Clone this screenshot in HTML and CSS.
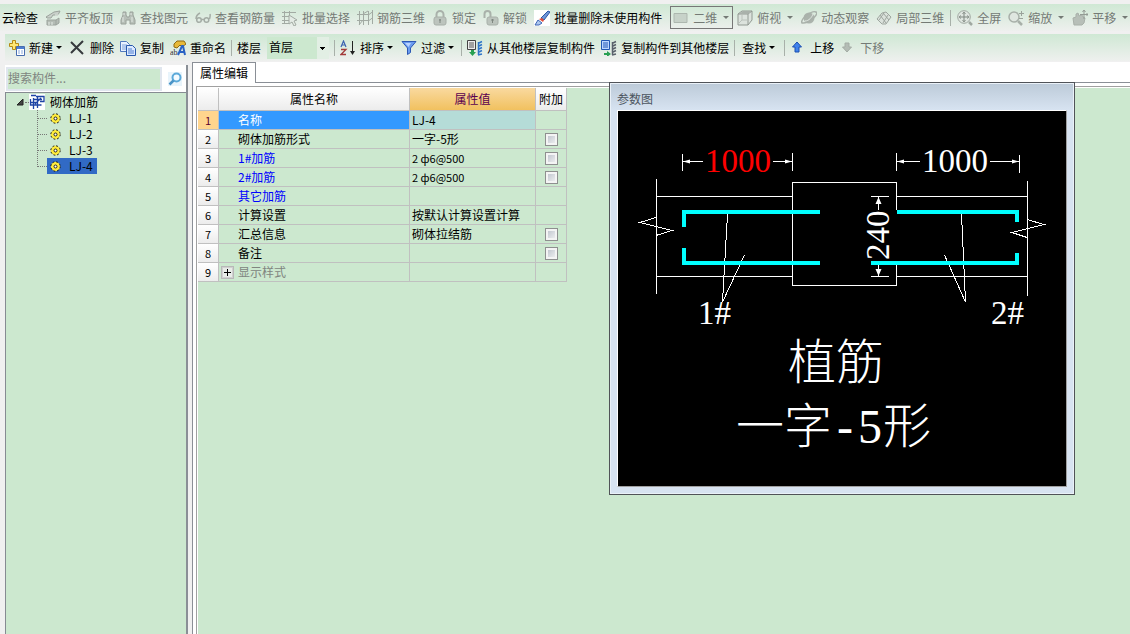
FILE: index.html
```html
<!DOCTYPE html>
<html lang="zh-CN">
<head>
<meta charset="utf-8">
<title>属性编辑</title>
<link rel="stylesheet" href="styles.css">
</head>
<body>
<div class="toolbar toolbar-view" role="toolbar" aria-label="视图">
  <button class="tool">云检查</button>
  <button class="tool off"><svg class="icon" viewBox="0 0 16 16"><path d="M1 7l8-5 6-1-2 4H8l-2 3H2z" fill="#c9d0ca" stroke="#9ba39c"/><path d="M2 10h9v5H2zM11 10l3-2v5l-3 2" fill="#b4bcb5" stroke="#9ba39c"/><path d="M4 12v3M7 12v3M10 5l4 0" stroke="#e4ebe5"/></svg>平齐板顶</button>
  <button class="tool off"><svg class="icon" viewBox="0 0 16 16"><path d="M3 2h3v3l1 2h2l1-2V2h3v3l2 5v4h-5v-4H6v4H1v-4l2-5z" fill="#b7bfb8" stroke="#9aa29b"/><path d="M3 7v5M12 7v5M4 3v2M11 3v2" stroke="#e2e9e3"/></svg>查找图元</button>
  <button class="tool off"><svg class="icon" viewBox="0 0 16 16" fill="none" stroke="#a4aca5" stroke-width="1.5"><path d="M5 3Q1 5 1 9M14.500 9q1-3 .5-5"/><circle cx="4" cy="10" r="2.300"/><circle cx="11.500" cy="10" r="2.300"/><path d="M6.500 9.500h2.500"/></svg>查看钢筋量</button>
  <button class="tool off"><svg class="icon" viewBox="0 0 16 16" fill="none" stroke="#a2aaa3"><path d="M2.500 1v13M0 2.500h14M0 6.500h8M0 10.500h8M0 13.500h7M7.500 1v6"/><path d="M7 5l8 5-3 1 2 4-2 1-2-4-3 2z" fill="#e4ebe5"/></svg>批量选择</button>
  <button class="tool off"><svg class="icon" viewBox="0 0 16 16" fill="none" stroke="#a2aaa3"><path d="M0 4.500h12l4-3M0 10.500h12l4-3M2.500 1v14M6.500 1v14M11.500 1v14M15.500 0v14M2 15l4-5M6 4l5-3"/></svg>钢筋三维</button>
  <button class="tool off"><svg class="icon" viewBox="0 0 16 16"><path d="M4.500 7V4.500a3.500 3.500 0 0 1 7 0V7" fill="none" stroke="#a9b1aa" stroke-width="2"/><rect x="2" y="7" width="12" height="8" rx="2" fill="#bcc4bd" stroke="#a8b0a9"/><path d="M8 9v4M7 10h2" stroke="#7f8780"/></svg>锁定</button>
  <button class="tool off"><svg class="icon" viewBox="0 0 16 16"><path d="M1.500 8V4a3 3 0 0 1 6 0v3" fill="none" stroke="#a9b1aa" stroke-width="2"/><rect x="4" y="7" width="11" height="8" rx="2" fill="#bcc4bd" stroke="#a8b0a9"/><path d="M9.500 9v4M8 10h3" stroke="#7f8780"/></svg>解锁</button>
  <button class="tool"><svg class="icon" viewBox="0 0 16 16"><path fill="#fff" d="M0 0h16v16H0z"/><path d="M7 8l7-7 2 1-6 8z" fill="#6f96d8" stroke="#2855a6"/><path d="M5 9l3-1 2 2-1 2z" fill="#e14c3a"/><path d="M4 10l4 3-3 2H1z" fill="#afc8ef" stroke="#3e66b5"/></svg>批量删除未使用构件</button>
  <button class="tool off framed"><svg class="icon" viewBox="0 0 16 16"><path d="M1 3.500h13v9H1z" fill="#c7d2c9" stroke="#adb7af"/></svg>二维<span class="caret"></span></button>
  <button class="tool off"><svg class="icon" viewBox="0 0 16 16"><path d="M1 4l4-3h10v9l-4 5H1z" fill="#dce3dd" stroke="#929a93"/><path d="M1 4h10l4-3M11 4v11" fill="none" stroke="#929a93"/><path d="M2 4l4-3h8l-3 3z" fill="#a9b1aa"/><path d="M5 5v5l-4 4M5 10h6" fill="none" stroke="#bac2bb"/></svg>俯视<span class="caret"></span></button>
  <button class="tool off"><svg class="icon" viewBox="0 0 16 16"><circle cx="8" cy="8" r="5.500" fill="#abb3ac"/><path d="M1 13c-2-4 10-13 14-11s-8 12-14 11z" fill="none" stroke="#a9b1aa" stroke-width="1.500"/><path d="M4 11c4 0 7-4 8-7" fill="none" stroke="#e0e7e1"/></svg>动态观察</button>
  <button class="tool off"><svg class="icon" viewBox="0 0 16 16"><path d="M1 9l5-6 4-1 5 5-5 7H6z" fill="#dbe2dc" stroke="#9ea69f"/><path d="M4 5l6 8M7 3l6 7M3 10l5-7M7 13l5-8" fill="none" stroke="#9ea69f"/></svg>局部三维</button>
  <span class="sep"></span>
  <button class="tool off"><svg class="icon" viewBox="0 0 16 16" fill="none" stroke="#a0a8a1"><circle cx="7" cy="7" r="6.300" fill="#dfe6e0"/><path d="M7 2v10M2 7h10" stroke="#7f8780"/><path d="M5.500 4L7 2l1.500 2M5.500 10L7 12l1.500-2M4 5.500L2 7l2 1.500M10 5.500L12 7l-2 1.500" stroke="#8c948d"/><path d="M12 12l3 3" stroke-width="2.500"/></svg>全屏</button>
  <button class="tool off"><svg class="icon" viewBox="0 0 16 16" fill="none" stroke="#a8b0a9"><circle cx="6" cy="7" r="5" fill="#dfe6e0" stroke-width="1.500"/><path d="M10 11l4 4" stroke-width="2.500"/><path d="M11 3.500h5M13.500 1v5M11 8.500h4" stroke="#9aa29b"/></svg>缩放<span class="caret"></span></button>
  <button class="tool off"><svg class="icon" viewBox="0 0 16 16"><path d="M2 15l-1-7 3-1V4l2-1 1 3 3-1 1 2 2 1-1 5-2 2z" fill="#b7bfb8" stroke="#a8b0a9"/><path d="M12 0v9M8 4.500h8M10.500 2L12 0l1.500 2M14.500 3l1.500 1.500L14.500 6" fill="none" stroke="#939b94"/></svg>平移<span class="caret"></span></button>
</div>

<div class="toolbar toolbar-edit" role="toolbar" aria-label="构件">
  <button class="tool"><svg class="icon" viewBox="0 0 16 16"><path d="M3.500.500h3v3h3v3h-3v3h-3v-3h-3v-3h3z" fill="#ffe873" stroke="#b58b14"/><path d="M7.500 6.500h8v9h-8z" fill="#fff" stroke="#486dae"/><path d="M8 7h7v2H8z" fill="#4f7fd0"/><path d="M9 11h2M12 11h2M9 13h2M12 13h2" stroke="#86a9dd"/></svg>新建<span class="caret"></span></button>
  <button class="tool"><svg class="icon" viewBox="0 0 16 16"><path d="M1 2l12 12M13 1L1 13" stroke="#36393d" stroke-width="2"/></svg>删除</button>
  <button class="tool"><svg class="icon" viewBox="0 0 16 16"><path d="M.500 1.500h6l3 3v7h-9z" fill="#e9f1ff" stroke="#5179bd"/><path d="M2 5h5M2 7h5M2 9h5" stroke="#7da0da"/><path d="M6.500 5.500h6l3 3v7h-9z" fill="#dce9ff" stroke="#2858ac"/><path d="M8 9h4M8 11h6M8 13h6" stroke="#4f7fd0"/></svg>复制</button>
  <button class="tool"><svg class="icon" viewBox="0 0 16 16"><path d="M4 4l3-3h7l2 3-4 3-2-2-3 3-3-1z" fill="#e7b93a" stroke="#8e6a14"/><text x="0" y="15" class="glyph-ab">ab</text><path d="M8 15l4-9h1l2 9M9 12h5" fill="none" stroke="#2a62c4" stroke-width="2"/></svg>重命名</button>
  <span class="sep"></span>
  <label for="floor">楼层</label>
  <select class="floor" id="floor"><option>首层</option></select>
  <span class="sep"></span>
  <button class="tool"><svg class="icon" viewBox="0 0 16 16" fill="none"><path d="M1 7l2.500-6L6 7M2 5h3" stroke="#3b62b0" stroke-width="1.200"/><path d="M1 9.500h5L1 14.500h5" stroke="#a33b3b" stroke-width="1.300"/><path d="M12.500 1v12" stroke="#222"/><path d="M10 11h5l-2.500 4z" fill="#222"/></svg>排序<span class="caret"></span></button>
  <button class="tool"><svg class="icon" viewBox="0 0 16 16"><path d="M1 1.500h14L9.500 8v4.500l-3 2V8z" fill="#6a9cf0" stroke="#2d58b4"/><path d="M4 3h6L7.500 7z" fill="#b9d3ff"/></svg>过滤<span class="caret"></span></button>
  <span class="sep"></span>
  <button class="tool"><svg class="icon" viewBox="0 0 16 16"><path d="M.500.500h8v9h-8z" fill="#eee" stroke="#444"/><path d="M2 3h5M2 5h5M2 7h5" stroke="#555"/><path d="M4 10h3v2h2l-3.500 4L2 12h2z" fill="#28a052"/><path d="M11.500 2v13M11 3.500l4-2M11 6.500l4-2M11 9.500l4-2M11 12.500l4-2M11 15l4-1" stroke="#2f75c8" fill="none" stroke-width="1.500"/></svg>从其他楼层复制构件</button>
  <button class="tool"><svg class="icon" viewBox="0 0 16 16"><path d="M.500.500h8v9h-8z" fill="#bcd5ff" stroke="#2256b4"/><path d="M2 3h5M2 5h5M2 7h5" stroke="#2256b4"/><path d="M3 10v3h3v-2l4 3-4 3v-2H3z" fill="#28a052"/><path d="M11.500 2v13M11 3.500l4-2M11 6.500l4-2M11 9.500l4-2M11 12.500l4-2M11 15l4-1" stroke="#59616b" fill="none" stroke-width="1.500"/></svg>复制构件到其他楼层</button>
  <span class="sep"></span>
  <button class="tool text-only">查找<span class="caret"></span></button>
  <span class="sep"></span>
  <button class="tool"><svg class="icon" viewBox="0 0 16 16"><path d="M7 2l4.500 5H9v5H5V7H2.500z" fill="#3f82ec" stroke="#1c4fb0"/></svg>上移</button>
  <button class="tool off"><svg class="icon" viewBox="0 0 16 16"><path d="M7 12l4.500-5H9V3H5v4H2.500z" fill="#b4bcb5" stroke="#a4aca5"/></svg>下移</button>
</div>

<main class="work">
  <aside class="side">
    <div class="search">
      <input class="search-text" type="text" placeholder="搜索构件..." aria-label="搜索构件">
      <button class="search-go" aria-label="搜索"><svg viewBox="0 0 14 14" width="14" height="14"><path fill="#e8f4fb" d="M0 0h14v14H0z"/><circle cx="8.500" cy="5.500" r="4" fill="#f4fbff" stroke="#5ba9d9" stroke-width="2"/><path d="M5.500 8.500L1.500 12.500" stroke="#4a94c8" stroke-width="2.500"/></svg></button>
    </div>
    <div class="tree">
      <div class="tree-root">
        <svg width="7" height="7" viewBox="0 0 7 7"><path d="M6 0v6H0z" fill="#444" stroke="#222"/></svg>
        <span class="tree-dash"></span>
        <svg width="16" height="16" viewBox="0 0 16 16" fill="none"><path fill="#fff" d="M0 0h16v16H0z"/><path d="M2 1.500h5M1.500 5v6h11M4.500 4v11M8.500 2v12M4 5.500h9M7 2.500h8v5h-4M1 8.500h8M6 10l6-6" stroke="#1f45a5" stroke-width="1.300"/></svg>
        <span class="tree-name">砌体加筋</span>
      </div>
      <ul class="tree-list">
        <li><span class="tree-dash"></span><span class="tree-item"><svg class="gear" viewBox="0 0 11 11"><circle cx="5.500" cy="5.500" r="4.700" fill="#ffec3d" stroke="#111" stroke-dasharray="1.850 1.850"/><circle cx="5.500" cy="5.500" r="1.500" fill="#fff" stroke="#222"/></svg>LJ-1</span></li>
        <li><span class="tree-dash"></span><span class="tree-item"><svg class="gear" viewBox="0 0 11 11"><circle cx="5.500" cy="5.500" r="4.700" fill="#ffec3d" stroke="#111" stroke-dasharray="1.850 1.850"/><circle cx="5.500" cy="5.500" r="1.500" fill="#fff" stroke="#222"/></svg>LJ-2</span></li>
        <li><span class="tree-dash"></span><span class="tree-item"><svg class="gear" viewBox="0 0 11 11"><circle cx="5.500" cy="5.500" r="4.700" fill="#ffec3d" stroke="#111" stroke-dasharray="1.850 1.850"/><circle cx="5.500" cy="5.500" r="1.500" fill="#fff" stroke="#222"/></svg>LJ-3</span></li>
        <li><span class="tree-dash"></span><span class="tree-item selected"><svg class="gear" viewBox="0 0 11 11"><circle cx="5.500" cy="5.500" r="4.700" fill="#ffec3d" stroke="#111" stroke-dasharray="1.850 1.850"/><circle cx="5.500" cy="5.500" r="1.500" fill="#fff" stroke="#222"/></svg>LJ-4</span></li>
      </ul>
    </div>
  </aside>

  <section class="editor">
    <div class="tabs"><button class="tab">属性编辑</button><span class="tab-rest"></span></div>
    <div class="pane">
      <div class="sheet">
        <table class="props">
          <colgroup><col class="c-num"><col class="c-name"><col class="c-value"><col class="c-add"></colgroup>
          <thead><tr><th></th><th>属性名称</th><th class="active">属性值</th><th>附加</th></tr></thead>
          <tbody>
            <tr class="current"><th>1</th><td class="name">名称</td><td>LJ-4</td><td></td></tr>
            <tr><th>2</th><td class="name">砌体加筋形式</td><td>一字-5形</td><td class="add"><input type="checkbox" aria-label="附加 砌体加筋形式"></td></tr>
            <tr><th>3</th><td class="name key">1#加筋</td><td class="spec">2 ф6@500</td><td class="add"><input type="checkbox" aria-label="附加 1#加筋"></td></tr>
            <tr><th>4</th><td class="name key">2#加筋</td><td class="spec">2 ф6@500</td><td class="add"><input type="checkbox" aria-label="附加 2#加筋"></td></tr>
            <tr><th>5</th><td class="name key">其它加筋</td><td></td><td></td></tr>
            <tr><th>6</th><td class="name">计算设置</td><td>按默认计算设置计算</td><td></td></tr>
            <tr><th>7</th><td class="name">汇总信息</td><td>砌体拉结筋</td><td class="add"><input type="checkbox" aria-label="附加 汇总信息"></td></tr>
            <tr><th>8</th><td class="name">备注</td><td></td><td class="add"><input type="checkbox" aria-label="附加 备注"></td></tr>
            <tr><th>9</th><td class="group"><div class="group-row"><button class="expand" aria-label="展开"></button>显示样式</div></td><td></td><td></td></tr>
          </tbody>
        </table>
      </div>
    </div>
  </section>
</main>

<section class="dialog" aria-label="参数图">
  <h2 class="dialog-title">参数图</h2>
  <svg class="drawing" viewBox="618 111 448 375" width="448" height="375">
    <g class="thin">
      <path d="M682.500 154v17M792.500 153v18M682 161.500h21M773 161.500h19"/>
      <path d="M896.500 153v18M1019.500 155v18M896 161.500h24M990 161.500h29"/>
      <path d="M656.500 179v115M1027.500 181v115"/>
      <path d="M656 196.500h136M656 276.500h136M896 196.500h131M896 276.500h131"/>
      <path d="M896.500 210v-27.500h-104v103h104V265"/>
      <path d="M656 217.500l-16 5 32 8-16 5M1027 219.500l17 5-32 8 15 5"/>
      <path d="M727.500 214l-5 88 22-47M961.500 214l4 88-21-47"/>
      <path d="M871 196.500h18M871 276.500h18M878.500 196v14M878.500 265v11"/>
    </g>
    <g class="heads">
      <path d="M683 161.500l7-2v4zM792 161.500l-7-2v4zM897 161.500l7-2v4zM1019 161.500l-7-2v4z"/>
      <path d="M878.500 197l3 7h-6zM878.500 276l3-7h-6z"/>
    </g>
    <g class="bars">
      <path d="M820 212H684v15M820 263H684v-15"/>
      <path d="M897 212h120v10M871 263h146v-10"/>
    </g>
    <g class="dims">
      <text class="hot" x="705" y="172">1000</text>
      <text x="922" y="172">1000</text>
      <text x="698" y="324">1#</text>
      <text x="991" y="324">2#</text>
      <text transform="translate(889 260) rotate(-90)">240</text>
    </g>
    <g class="caption">
      <text x="788" y="379">植筋</text>
      <text y="443"><tspan x="736">一字</tspan><tspan x="837">-</tspan><tspan x="858">5</tspan><tspan x="883">形</tspan></text>
    </g>
  </svg>
</section>
</body>
</html>
```

FILE: styles.css
```css
* { box-sizing: border-box; }

body {
  margin: 0;
  min-height: 100vh;
  display: flex;
  flex-direction: column;
  background: #f0f0f0;
  color: #000;
  font: 12px/18px "Noto Sans CJK SC", sans-serif;
  overflow: hidden;
}

button, input, select { font: inherit; color: inherit; margin: 0; }
button { padding: 0; border: 0; background: none; }
svg { display: block; flex: none; }

/* Toolbars */
.toolbar {
  display: flex;
  align-items: center;
  gap: 7px;
  height: 27px;
  background: linear-gradient(#cfe8d4, #eef0ee);
  white-space: nowrap;
}
.toolbar-view { margin-top: 4px; padding-left: 2px; }
.toolbar-edit { margin: 3px 0 1px 5px; padding-left: 4px; gap: 6px; }
.tool { display: flex; align-items: center; gap: 4px; flex: none; }
.text-only { padding: 0 2px; }
.off { color: #747a75; }
.icon { width: 16px; height: 16px; }
.framed { height: 23px; margin: 0 -3px 0 1px; padding: 0 2px; border: 1px solid #777; }
.caret {
  margin: 0 1px 0 2px;
  border: solid transparent;
  border-width: 3px 3px 0;
  border-top-color: currentColor;
}
.toolbar-edit .caret { margin: 0 2px 0 -1px; }
.sep { width: 1px; height: 16px; margin: 0 -1px; flex: none; background: #a8b0a9; }
.glyph-ab { font: 8px "Liberation Serif", serif; fill: #333; }
.floor {
  width: 62px;
  height: 22px;
  padding: 0 0 2px 2px;
  border: 0;
  border-radius: 0;
  appearance: none;
  background:
    linear-gradient(#000, #000) 53px 10px / 5px 1px no-repeat,
    linear-gradient(#000, #000) 54px 11px / 3px 1px no-repeat,
    linear-gradient(#000, #000) 55px 12px / 1px 1px no-repeat,
    linear-gradient(#e2efe4, #e2efe4) 50px 0 / 12px 22px no-repeat,
    #cce8cf;
}

/* Work area */
.work { flex: 1; display: flex; gap: 4px; }
.side {
  width: 183px;
  margin: 3px 0 0 5px;
  display: flex;
  flex-direction: column;
  border-right: 2px solid #8a8f96;
  background: #fff;
}
.search { display: flex; align-items: center; height: 27px; padding: 2px 1px; }
.search-text {
  width: 156px;
  height: 24px;
  flex: none;
  padding: 0 0 3px;
  border: 2px solid #e0e6ee;
  background: #cce8cf;
}
.search-text::placeholder { color: #808580; opacity: 1; }
.search-go { padding-left: 6px; }
.tree {
  flex: 1;
  padding: 1px 0 0 11px;
  border: solid #868b92;
  border-width: 1px 0 0 1px;
  background: #cce8cf;
}
.tree-root { display: flex; align-items: center; height: 16px; }
.tree-dash { width: 10px; border-top: 1px dotted #777; }
.tree-root .tree-dash { width: 4px; margin-left: 1px; }
.tree-name { margin-left: 5px; }
.tree-list { margin: 0 0 0 20px; padding: 0; list-style: none; }
.tree-list li {
  display: flex;
  align-items: center;
  height: 16px;
  background: repeating-linear-gradient(#777 0 1px, transparent 1px 2px) 0 0 / 1px 100% no-repeat;
}
.tree-list li:last-child { background-size: 1px 8px; }
.tree-item { display: flex; align-items: center; gap: 8px; height: 16px; padding: 0 4px 0 3px; }
.selected { background: #316ac5; }
.gear { width: 11px; height: 11px; }

.editor { flex: 1; display: flex; flex-direction: column; background: #fff; border-left: 1px solid #8a8f96; }
.tabs { display: flex; height: 21px; }
.tab { width: 63px; border: solid #8a8f96; border-width: 1px 1px 0 0; }
.tab-rest { flex: 1; border-bottom: 1px solid #8a8f96; }
.pane {
  flex: 1;
  display: flex;
  margin: 3px 0 0 3px;
  padding: 1px 0 0 1px;
  border: solid #a0a0a0;
  border-width: 1px 0 0 1px;
}
.sheet { flex: 1; background: #cce8cf; }

/* Property grid */
.props { width: 369px; table-layout: fixed; border-collapse: separate; border-spacing: 0; }
.c-num { width: 21px; }
.c-name { width: 191px; }
.c-value { width: 126px; }
.c-add { width: 31px; }
.props th, .props td {
  height: 19px;
  padding: 0 2px;
  border: solid #c0c0c0;
  border-width: 0 1px 1px 0;
  font-weight: normal;
  text-align: left;
  white-space: nowrap;
}
.props th {
  padding: 0;
  background: linear-gradient(#fff, #ececec);
  text-align: center;
  font-size: 11px;
}
.props thead th { height: 23px; font-size: 12px; }
.props thead .active { background: linear-gradient(#f9d99f, #f1c15f); color: #5a0050; }
.props .current th { background: #ffd58d; color: #5a0030; }
.props .current .name { background: #3399ff; color: #fff; }
.props .current td:nth-child(3) { background: #b5dcd8; }
.props .name { padding-left: 19px; }
.props .key { color: #0000ff; }
.props .spec { font-size: 11px; }
.props .add { padding: 0 0 0 9px; }
.props .group { color: #808580; }
.group-row { display: flex; align-items: center; gap: 4px; }
.expand {
  width: 13px;
  height: 13px;
  border: 2px solid #d0d0d0;
  outline: 1px solid #b8b8b8;
  outline-offset: -1px;
  background:
    linear-gradient(#000, #000) center / 7px 1px no-repeat,
    linear-gradient(#000, #000) center / 1px 7px no-repeat,
    #e8ece8;
}
.props input {
  display: block;
  width: 13px;
  height: 13px;
  appearance: none;
  border: 1px solid #8e8f8f;
  background: linear-gradient(135deg, #b8bec8, #f6f6f6);
  box-shadow: inset 0 0 0 2px #f4f4f4;
}

/* Floating parameter drawing */
.dialog {
  position: absolute;
  left: 609px;
  top: 82px;
  padding: 1px 7px 7px;
  border: 1px solid #505358;
  background: linear-gradient(#bccad8, #d7e3f1 27px);
  box-shadow: inset 0 0 0 1px #eaf1f8;
}
.dialog-title { margin: 0; height: 26px; color: #4c5560; font-size: 12px; font-weight: normal; line-height: 30px; }
.drawing { background: #000; border: solid #a0a0a0; border-width: 1px; border-color: #fff #a0a0a0 #a0a0a0 #fff; box-sizing: content-box; }
.thin { fill: none; stroke: #fff; shape-rendering: crispEdges; }
.heads { fill: #fff; }
.bars { fill: none; stroke: #00ffff; stroke-width: 4; }
.dims { fill: #fff; font: 33px "Liberation Serif", serif; }
.hot { fill: #ff0000; }
.caption { fill: #fff; font: 300 48px "Liberation Serif", "Noto Sans CJK SC", serif; }
```
